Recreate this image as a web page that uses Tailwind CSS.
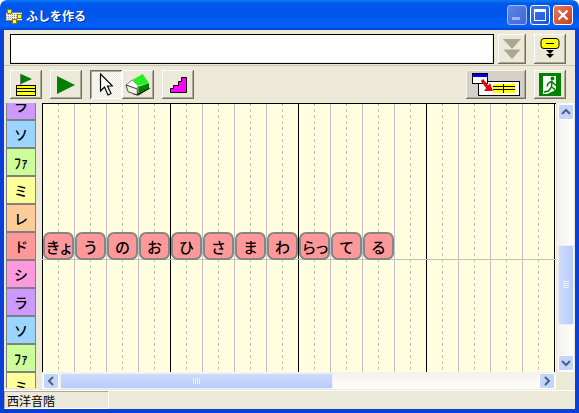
<!DOCTYPE html>
<html lang="ja">
  <head>
    <meta charset="UTF-8" />
    <title>ふしを作る</title>
    <script src="https://cdn.jsdelivr.net/npm/@tailwindcss/browser@4"></script>
  </head>
  <body class="bg-white">
    <div class="w-[579px] h-[413px] flex flex-col overflow-hidden font-['Noto_Sans_CJK_JP',sans-serif] text-black">
      <!-- Title bar -->
      <div class="h-[30px] shrink-0 flex items-center pt-[2px] pl-[6px] pr-[6px] rounded-t-[7px] bg-[linear-gradient(180deg,#0a7cf0_0%,#0058ee_12%,#0054e8_45%,#0062fa_85%,#0058ea_92%,#003dd0_100%)]">
        <svg width="16" height="15" viewBox="0 0 16 15" class="shrink-0">
          <rect x="0" y="4" width="16" height="8" fill="#f0efe6" />
          <path d="M0 5.500h16M0 7.500h16M0 9.500h16" stroke="#9a9888" stroke-width="1" stroke-dasharray="1 1" />
          <path d="M0 3.500h16M0 11.500h16" stroke="#807c50" />
          <rect x="1.500" y="0.500" width="4" height="4" fill="#ffff33" stroke="#807c20" />
          <rect x="11.500" y="5.500" width="4" height="4" fill="#ffff33" stroke="#807c20" />
          <rect x="6.500" y="10.500" width="4" height="4" fill="#ffff33" stroke="#807c20" />
        </svg>
        <span class="ml-[4px] text-[12px] font-bold text-white leading-none [text-shadow:1px_1px_0_#0a2a9a]">ふしを作る</span>
        <div class="ml-auto mb-[2px] flex gap-[3px]">
          <div class="w-[20px] h-[20px] rounded-[3px] border border-[#a8bdf0] bg-[linear-gradient(135deg,#5c86e8,#3f66d8)] flex items-end pl-[4px] pb-[4px]">
            <div class="w-[8px] h-[3px] bg-[#9db4ee]"></div>
          </div>
          <div class="w-[20px] h-[20px] rounded-[3px] border border-white bg-[linear-gradient(135deg,#3f78f0,#1f50d8)] flex items-center justify-center">
            <div class="w-[12px] h-[12px] border border-white border-t-[3px]"></div>
          </div>
          <div class="w-[20px] h-[20px] rounded-[3px] border border-white bg-[linear-gradient(135deg,#e8795a,#c8401c)] flex items-center justify-center">
            <svg width="12" height="12" viewBox="0 0 12 12"><path d="M1.500 1.500l9 9M10.500 1.500l-9 9" stroke="#fff" stroke-width="2.400" /></svg>
          </div>
        </div>
      </div>

      <!-- Client area -->
      <div class="flex-1 min-h-0 flex flex-col bg-[#ece9d8] border-x-4 border-b-4 border-[#0a3fd8]">
        <!-- Input row -->
        <div class="h-[36px] shrink-0 flex items-start pt-[4px] pl-[6px] border-b border-[#c8c5b2]">
          <div class="w-[484px] h-[30px] bg-white border border-black shadow-[inset_-1px_-1px_0_#ece9d8]"></div>
          <div class="ml-[4px] w-[28px] h-[30px] flex items-center justify-center shadow-[inset_-1px_-1px_0_#716f64,inset_1px_1px_0_#fff,inset_-2px_-2px_0_#aca899]">
            <svg width="20" height="22" viewBox="0 0 20 22"><path d="M1 1h18l-9 10zM1 11h18l-9 10z" fill="#a9a78f" /><path d="M1 11h18" stroke="#ece9d8" /></svg>
          </div>
          <div class="ml-[8px] w-[32px] h-[30px] flex items-center justify-center shadow-[inset_-1px_-1px_0_#716f64,inset_1px_1px_0_#fff,inset_-2px_-2px_0_#aca899]">
            <svg width="20" height="22" viewBox="0 0 20 22">
              <rect x="1" y="0.500" width="18" height="10" rx="3" fill="#ffff00" stroke="#000" />
              <path d="M6 5.500h8" stroke="#000" />
              <path d="M6 12h8l-4 4zM6 16h8l-4 4z" fill="#000" />
            </svg>
          </div>
        </div>

        <!-- Toolbar -->
        <div class="h-[37px] shrink-0 flex items-start pt-[4px] pl-[6px]">
          <div class="w-[32px] h-[29px] flex items-center justify-center shadow-[inset_-1px_-1px_0_#716f64,inset_1px_1px_0_#fff,inset_-2px_-2px_0_#aca899]">
            <svg width="22" height="24" viewBox="0 0 22 24">
              <path d="M5.500 1v11" stroke="#777" />
              <path d="M6 1l11 5-11 5z" fill="#008000" />
              <rect x="1.500" y="12.500" width="19" height="10" fill="#ffff00" stroke="#000" />
              <path d="M1 15.500h20M1 18.500h20" stroke="#000" />
            </svg>
          </div>
          <div class="ml-[8px] w-[32px] h-[29px] flex items-center justify-center shadow-[inset_-1px_-1px_0_#716f64,inset_1px_1px_0_#fff,inset_-2px_-2px_0_#aca899]">
            <svg width="20" height="20" viewBox="0 0 20 20"><path d="M1 1l18 9-18 9z" fill="#008000" /></svg>
          </div>
          <div class="ml-[8px] w-[32px] h-[29px] flex items-center justify-center bg-[repeating-conic-gradient(#fff_0_25%,#ece9d8_0_50%)] bg-[length:2px_2px] shadow-[inset_1px_1px_0_#716f64,inset_-1px_-1px_0_#fff,inset_2px_2px_0_#aca899]">
            <svg width="14" height="23" viewBox="0 0 14 23"><path d="M1.500 1v17l4-4 3.500 8 3-1.500-3.500-7.500h5z" fill="#fff" stroke="#000" stroke-width="1.200" /></svg>
          </div>
          <div class="w-[32px] h-[29px] flex items-center justify-center shadow-[inset_-1px_-1px_0_#716f64,inset_1px_1px_0_#fff,inset_-2px_-2px_0_#aca899]">
            <svg width="26" height="22" viewBox="0 0 26 22">
              <path d="M8 20.500l5 1 12-7-1-1-11 6z" fill="#000" />
              <path d="M1 11l6.300-5 6 5.700-1.600 3.300z" fill="#fff" stroke="#333" stroke-width="0.600" />
              <path d="M1 11l11.300 4v6L3 17.700z" fill="#f4f2e8" stroke="#222" stroke-width="0.800" />
              <path d="M7.300 6L17.700 0 24 9.300l-10.700 2.400z" fill="#22ee22" />
              <path d="M13.300 12.700L24 9.300v5l-10.700 5z" fill="#008000" />
            </svg>
          </div>
          <div class="ml-[8px] w-[32px] h-[29px] flex items-center justify-center shadow-[inset_-1px_-1px_0_#716f64,inset_1px_1px_0_#fff,inset_-2px_-2px_0_#aca899]">
            <svg width="18" height="18" viewBox="0 0 18 18"><path d="M1.500 16.500v-4h3v-3h5v-4h3v-4h5v15z" fill="#ff00ff" stroke="#000" /></svg>
          </div>
          <div class="ml-[272px] w-[60px] h-[29px] flex items-center justify-center bg-[#d4d0c8] shadow-[inset_-1px_-1px_0_#716f64,inset_1px_1px_0_#f4f2e8,inset_-2px_-2px_0_#aca899]">
            <svg width="48" height="23" viewBox="0 0 48 23">
              <rect x="6.500" y="8.500" width="41" height="14" fill="#fff" stroke="#000" />
              <rect x="21" y="11" width="22" height="9" fill="#ffff00" />
              <path d="M21 13.500h22M21 16.500h22M31.500 11v9" stroke="#000" />
              <rect x="0.500" y="0.500" width="15" height="10" fill="#fff" stroke="#000" />
              <rect x="1" y="1" width="14" height="3" fill="#0000ff" />
              <path d="M10 7l6 8" stroke="#ee0000" stroke-width="3" />
              <path d="M21 18h-9l6-8z" fill="#ee0000" />
            </svg>
          </div>
          <div class="ml-[8px] w-[32px] h-[29px] flex items-center justify-center shadow-[inset_-1px_-1px_0_#716f64,inset_1px_1px_0_#fff,inset_-2px_-2px_0_#aca899]">
            <svg width="22" height="23" viewBox="0 0 22 23">
              <rect width="22" height="23" fill="#008000" />
              <path d="M4 3h13v14l-9 4H4z" fill="#fff" />
              <circle cx="13.500" cy="5.500" r="2" fill="#008000" />
              <path d="M13 8l-4 2.500-1 3M13 8l-.5 6 3.500 2.500 0 4.500M12.500 14l-3 4-4.500 1M13 9l3.500 3 3 0" stroke="#008000" stroke-width="1.500" fill="none" />
            </svg>
          </div>
        </div>

        <!-- Score area -->
        <div class="flex-1 min-h-0 flex">
          <!-- Scale keys -->
          <div class="ml-[2px] w-[30px] h-[285px] overflow-hidden flex flex-col border-x border-[#808080] text-[14px] font-medium leading-none">
            <div class="h-[16px] shrink-0 bg-[#cc99ff] flex justify-center items-end overflow-hidden"><span class="mb-[7px]">ラ</span></div>
            <div class="h-[28px] shrink-0 border-t-2 border-[#808080] bg-[#99d5ff] flex items-center justify-center">ソ</div>
            <div class="h-[28px] shrink-0 border-t-2 border-[#808080] bg-[#ccff99] flex items-center justify-center">ﾌｧ</div>
            <div class="h-[28px] shrink-0 border-t-2 border-[#808080] bg-[#ffff99] flex items-center justify-center">ミ</div>
            <div class="h-[28px] shrink-0 border-t-2 border-[#808080] bg-[#ffcc99] flex items-center justify-center">レ</div>
            <div class="h-[28px] shrink-0 border-t-2 border-[#808080] bg-[#ff9999] flex items-center justify-center">ド</div>
            <div class="h-[28px] shrink-0 border-t-2 border-[#808080] bg-[#ff99dd] flex items-center justify-center">シ</div>
            <div class="h-[28px] shrink-0 border-t-2 border-[#808080] bg-[#cc99ff] flex items-center justify-center">ラ</div>
            <div class="h-[28px] shrink-0 border-t-2 border-[#808080] bg-[#99d5ff] flex items-center justify-center">ソ</div>
            <div class="h-[28px] shrink-0 border-t-2 border-[#808080] bg-[#ccff99] flex items-center justify-center">ﾌｧ</div>
            <div class="h-[28px] shrink-0 border-t-2 border-[#808080] bg-[#ffff99] flex items-center justify-center">ミ</div>
          </div>

          <div class="ml-[6px] w-[514px] flex flex-col">
            <!-- Staff -->
            <div class="relative h-[269px] bg-[#ffffe0] overflow-hidden">
              <svg width="514" height="269" class="block">
                <defs>
                  <pattern id="bar" width="128" height="6" patternUnits="userSpaceOnUse">
                    <path d="M0.500 0v6" stroke="#000" />
                    <path d="M32.500 0v6M64.500 0v6M96.500 0v6" stroke="#c0c0c0" />
                    <path d="M16.500 0v3M48.500 0v3M80.500 0v3M112.500 0v3" stroke="#c0c0c0" />
                  </pattern>
                </defs>
                <rect width="514" height="269" fill="url(#bar)" />
                <path d="M0 156.500h514" stroke="#c0c0c0" />
                <path d="M0 0.500h514" stroke="#000" />
              </svg>
              <div class="absolute left-[1px] top-[129px] flex gap-[1px] text-[15px] font-medium leading-none">
                <div class="w-[31px] h-[28px] rounded-[7px] border-2 border-[#868686] bg-[#ff9999] flex items-center justify-center tracking-[-2px]">きょ</div>
                <div class="w-[31px] h-[28px] rounded-[7px] border-2 border-[#868686] bg-[#ff9999] flex items-center justify-center">う</div>
                <div class="w-[31px] h-[28px] rounded-[7px] border-2 border-[#868686] bg-[#ff9999] flex items-center justify-center">の</div>
                <div class="w-[31px] h-[28px] rounded-[7px] border-2 border-[#868686] bg-[#ff9999] flex items-center justify-center">お</div>
                <div class="w-[31px] h-[28px] rounded-[7px] border-2 border-[#868686] bg-[#ff9999] flex items-center justify-center">ひ</div>
                <div class="w-[31px] h-[28px] rounded-[7px] border-2 border-[#868686] bg-[#ff9999] flex items-center justify-center">さ</div>
                <div class="w-[31px] h-[28px] rounded-[7px] border-2 border-[#868686] bg-[#ff9999] flex items-center justify-center">ま</div>
                <div class="w-[31px] h-[28px] rounded-[7px] border-2 border-[#868686] bg-[#ff9999] flex items-center justify-center">わ</div>
                <div class="w-[31px] h-[28px] rounded-[7px] border-2 border-[#868686] bg-[#ff9999] flex items-center justify-center tracking-[-2px]">らっ</div>
                <div class="w-[31px] h-[28px] rounded-[7px] border-2 border-[#868686] bg-[#ff9999] flex items-center justify-center">て</div>
                <div class="w-[31px] h-[28px] rounded-[7px] border-2 border-[#868686] bg-[#ff9999] flex items-center justify-center">る</div>
              </div>
            </div>
            <!-- Horizontal scrollbar -->
            <div class="h-[17px] flex items-center gap-[1px] px-[1px] bg-[linear-gradient(180deg,#f3f1ec,#fefefb)]">
              <div class="w-[16px] h-[16px] rounded-[2px] border border-white bg-[#c4d5fb] flex items-center justify-center">
                <svg width="8" height="10" viewBox="0 0 8 10"><path d="M6 1L2 5l4 4" fill="none" stroke="#4d6185" stroke-width="2" /></svg>
              </div>
              <div class="w-[273px] h-[16px] rounded-[2px] border border-[#e8eefc] bg-[linear-gradient(180deg,#cddafc,#b8ccf9)] flex items-center justify-center">
                <svg width="8" height="8" viewBox="0 0 8 8"><path d="M0.500 1v6M2.500 1v6M4.500 1v6M6.500 1v6" stroke="#eef3ff" /></svg>
              </div>
              <div class="ml-auto w-[16px] h-[16px] rounded-[2px] border border-white bg-[#c4d5fb] flex items-center justify-center">
                <svg width="8" height="10" viewBox="0 0 8 10"><path d="M2 1l4 4-4 4" fill="none" stroke="#4d6185" stroke-width="2" /></svg>
              </div>
            </div>
          </div>

          <!-- Vertical scrollbar -->
          <div class="ml-[1px] w-[17px] h-[269px] flex flex-col items-center gap-[1px] py-[1px] bg-[linear-gradient(90deg,#f3f1ec,#fefefb)]">
            <div class="w-[16px] h-[16px] rounded-[2px] border border-white bg-[#c4d5fb] flex items-center justify-center">
              <svg width="10" height="8" viewBox="0 0 10 8"><path d="M1 6l4-4 4 4" fill="none" stroke="#4d6185" stroke-width="2" /></svg>
            </div>
            <div class="mt-[124px] w-[16px] h-[80px] rounded-[2px] border border-[#e8eefc] bg-[linear-gradient(90deg,#cddafc,#b8ccf9)] flex items-center justify-center">
              <svg width="8" height="8" viewBox="0 0 8 8"><path d="M1 0.500h6M1 2.500h6M1 4.500h6M1 6.500h6" stroke="#eef3ff" /></svg>
            </div>
            <div class="mt-auto w-[16px] h-[16px] rounded-[2px] border border-white bg-[#c4d5fb] flex items-center justify-center">
              <svg width="10" height="8" viewBox="0 0 10 8"><path d="M1 2l4 4 4-4" fill="none" stroke="#4d6185" stroke-width="2" /></svg>
            </div>
          </div>
        </div>

        <!-- Status bar -->
        <div class="h-[19px] shrink-0 flex border-t border-white">
          <div class="w-[105px] h-[18px] pl-[2px] border border-t-[#aca899] border-l-[#aca899] border-r-white border-b-white text-[12px] leading-[17px]">西洋音階</div>
        </div>
      </div>
    </div>
  </body>
</html>
